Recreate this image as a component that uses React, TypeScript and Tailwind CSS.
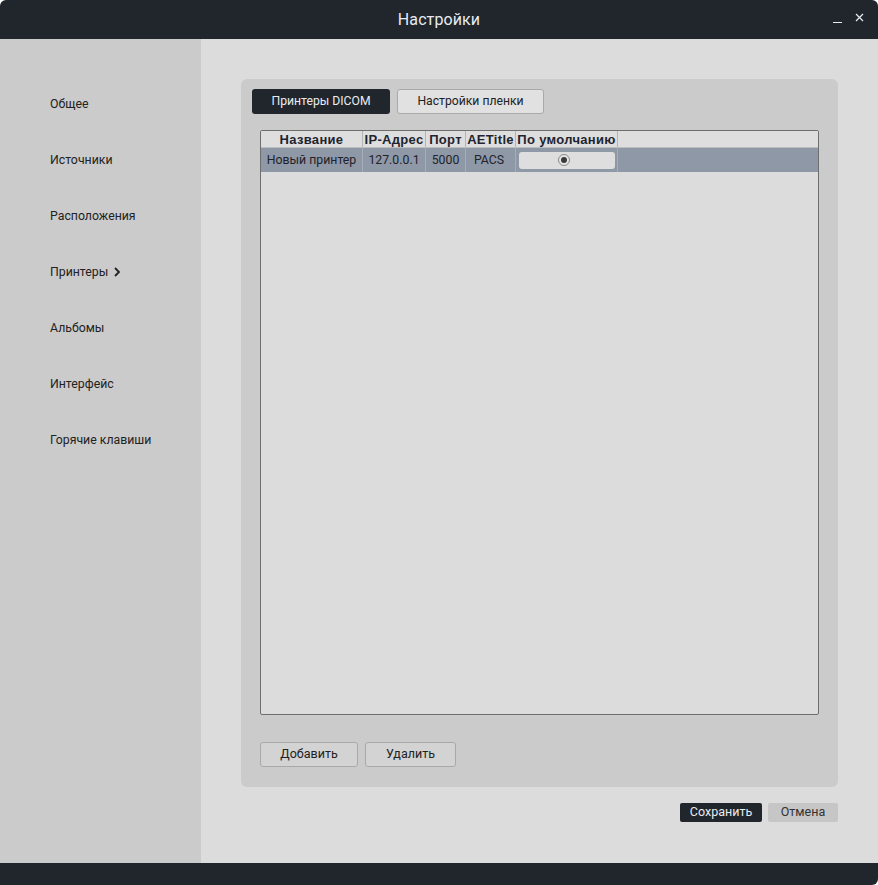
import React from 'react';

const sections = ['Общее', 'Источники', 'Расположения', 'Принтеры', 'Альбомы', 'Интерфейс', 'Горячие клавиши'];

const columns = [
  { title: 'Название', w: 'w-[102px]' },
  { title: 'IP-Адрес', w: 'w-[63px]' },
  { title: 'Порт', w: 'w-[40px]' },
  { title: 'AETitle', w: 'w-[50px]' },
  { title: 'По умолчанию', w: 'w-[102px]' },
];

const printers = [{ name: 'Новый принтер', ip: '127.0.0.1', port: '5000', ae: 'PACS' }];

export default function App() {
  return (
    <div className="w-[878px] h-[885px] flex flex-col bg-white font-['Roboto',sans-serif] text-[#222]">
      {/* Заголовок окна */}
      <div className="relative h-[39px] shrink-0 bg-[#21252c] rounded-t-[6px] flex items-center justify-center">
        <span className="text-[16px] text-[#e8ecf2] tracking-[0.1px]">Настройки</span>
        <div className="absolute right-[14px] top-[11px] flex items-center gap-[13px] text-[#e8ecf2]">
          <span className="block w-[9px] h-[1px] bg-[#e8ecf2] mt-[11px]" />
          <svg width="9" height="9" viewBox="0 0 9 9" className="mt-[1px]">
            <path d="M1 1L8 8M8 1L1 8" stroke="#e8ecf2" strokeWidth="1.2" />
          </svg>
        </div>
      </div>

      <div className="flex flex-1 min-h-0">
        {/* Боковое меню */}
        <div className="w-[201px] shrink-0 bg-[#cbcbcb] pt-[37px]">
          {sections.map((s) => (
            <div key={s} className="h-[56px] flex items-center pl-[50px] text-[12.3px] text-[#222]">
              {s}
              {s === 'Принтеры' && (
                <svg width="8" height="10" viewBox="0 0 8 10" className="ml-[5px]">
                  <path d="M2 1L6 5L2 9" stroke="#222" strokeWidth="1.8" fill="none" />
                </svg>
              )}
            </div>
          ))}
        </div>

        {/* Основная область */}
        <div className="flex-1 bg-[#dcdcdc] pt-[40px] px-[40px] flex flex-col">
          <div className="h-[708px] bg-[#cbcbcb] rounded-[6px] pt-[10px] px-[19px] pb-[20px] flex flex-col">
            <div className="flex gap-[7px] -ml-[8px]">
              <button className="h-[25px] w-[138px] rounded-[3px] bg-[#21252c] text-[#e8ecf2] text-[12.2px]">
                Принтеры DICOM
              </button>
              <button className="h-[25px] w-[147px] rounded-[3px] bg-[#e1e1e1] border border-[#a9a9a9] text-[12.2px] text-[#222]">
                Настройки пленки
              </button>
            </div>

            <div className="mt-[16px] flex-1 bg-[#dcdcdc] border border-[#6e6e6e] rounded-[2px] overflow-hidden">
              <div className="flex h-[17px] bg-[#dedede] border-b border-[#bdbdbd] font-['Liberation_Sans',sans-serif] font-bold text-[13px] text-[#1e2430] tracking-[0.3px]">
                {columns.map((c) => (
                  <div key={c.title} className={`${c.w} shrink-0 border-r border-[#b4b4b4] flex items-center justify-center leading-none`}>
                    {c.title}
                  </div>
                ))}
                <div className="flex-1" />
              </div>
              {printers.map((p) => (
                <div key={p.name} className="flex h-[24px] bg-[#8e98a7] text-[12.3px] text-[#1f2329]">
                  <div className="w-[102px] shrink-0 border-r border-[#a5adb9] flex items-center justify-center">{p.name}</div>
                  <div className="w-[63px] shrink-0 border-r border-[#a5adb9] flex items-center justify-center">{p.ip}</div>
                  <div className="w-[40px] shrink-0 border-r border-[#a5adb9] flex items-center justify-center">{p.port}</div>
                  <div className="w-[50px] shrink-0 border-r border-[#a5adb9] flex items-center justify-center pr-[3px]">{p.ae}</div>
                  <div className="w-[102px] shrink-0 border-r border-[#a5adb9] flex items-center justify-center">
                    <div className="w-[96px] h-[17px] rounded-[3px] bg-[#dedede] flex items-center justify-center">
                      <div className="w-[12px] h-[12px] rounded-full border border-[#8a8a8a] bg-[#e6e6e6] flex items-center justify-center mr-[6px]">
                        <div className="w-[6px] h-[6px] rounded-full bg-[#3a3a3a]" />
                      </div>
                    </div>
                  </div>
                  <div className="flex-1" />
                </div>
              ))}
            </div>

            <div className="mt-[27px] flex gap-[7px]">
              <button className="h-[25px] w-[98px] rounded-[3px] bg-[#d3d3d3] border border-[#a9a9a9] text-[12.5px] text-[#222]">
                Добавить
              </button>
              <button className="h-[25px] w-[91px] rounded-[3px] bg-[#d3d3d3] border border-[#a9a9a9] text-[12.5px] text-[#222]">
                Удалить
              </button>
            </div>
          </div>

          <div className="mt-[16px] flex justify-end gap-[6px]">
            <button className="h-[19px] w-[82px] rounded-[2px] bg-[#21252c] text-[#e8ecf2] text-[12.5px] leading-none">
              Сохранить
            </button>
            <button className="h-[19px] w-[70px] rounded-[2px] bg-[#c6c6c6] text-[12.5px] text-[#333] leading-none">
              Отмена
            </button>
          </div>
        </div>
      </div>

      <div className="h-[22px] shrink-0 bg-[#21252c] rounded-br-[6px]" />
    </div>
  );
}
